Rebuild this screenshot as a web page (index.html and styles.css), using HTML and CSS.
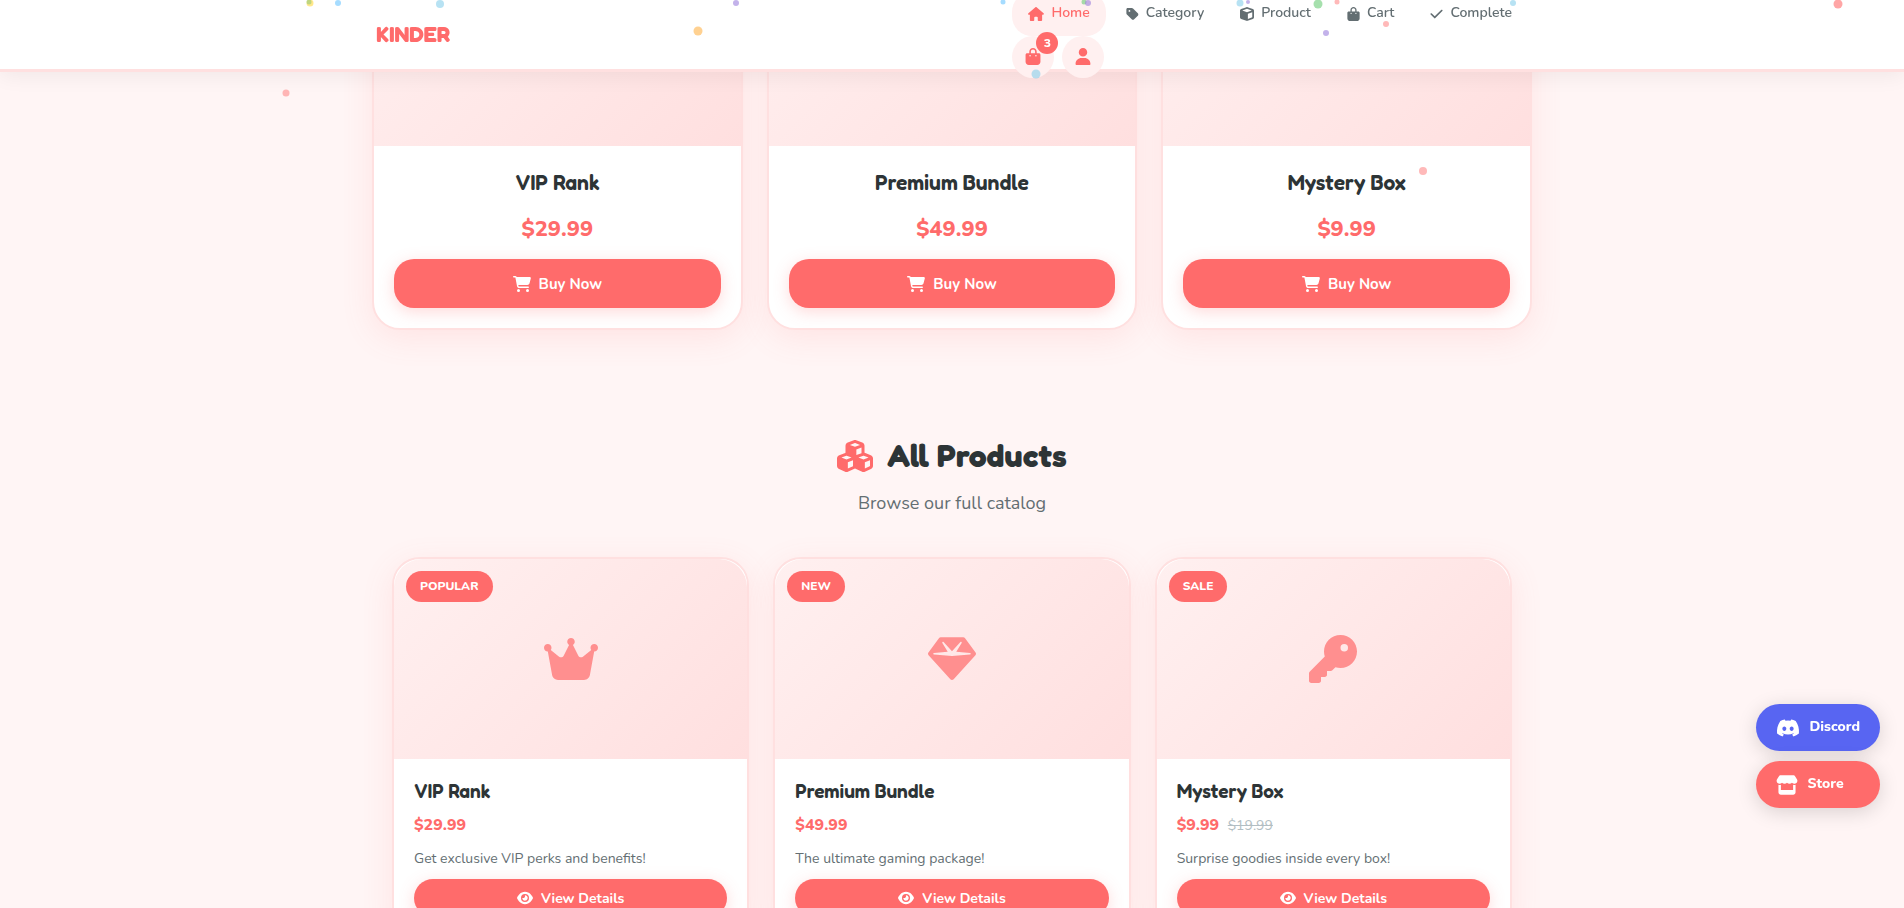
FILE: index.html
```html
<!DOCTYPE html>
<html lang="en">

<head>
  <meta charset="UTF-8">
  <meta name="viewport" content="width=device-width, initial-scale=1.0">
  <title>Kinder Store</title>
  <link rel="stylesheet" href="styles.css">
</head>

<body>
  <!-- Icon set -->
  <svg class="sprite" aria-hidden="true">
    <symbol id="i-home" viewBox="0 0 576 512"><path d="M575.8 255.5c0 18-15 32.1-32 32.1h-32l.7 160.2c0 2.7-.2 5.4-.5 8.1V472c0 22.1-17.9 40-40 40H456c-1.1 0-2.2 0-3.3-.1c-1.4 .1-2.8 .1-4.2 .1H416 392c-22.1 0-40-17.9-40-40V448 384c0-17.7-14.3-32-32-32H256c-17.7 0-32 14.3-32 32v64 24c0 22.1-17.9 40-40 40H160 128.1c-1.5 0-3-.1-4.5-.2c-1.2 .1-2.4 .2-3.6 .2H104c-22.1 0-40-17.9-40-40V360c0-.9 0-1.9 .1-2.8V287.6H32c-18 0-32-14-32-32.1c0-9 3-17 10-24L266.4 8c7-7 15-8 22-8s15 2 21 7L564.8 231.5c8 7 12 15 11 24z"/></symbol>
    <symbol id="i-tag" viewBox="0 0 448 512"><path d="M0 80V229.5c0 17 6.7 33.3 18.7 45.3l176 176c25 25 65.5 25 90.5 0L418.7 317.3c25-25 25-65.5 0-90.5l-176-176c-12-12-28.3-18.7-45.3-18.7H48C21.5 32 0 53.5 0 80zm112 32a32 32 0 1 1 0 64 32 32 0 1 1 0-64z"/></symbol>
    <symbol id="i-cube" viewBox="0 0 512 512"><path d="M234.5 5.7c13.9-5 29.1-5 43.1 0l192 68.6C495 83.4 512 107.5 512 134.6V377.4c0 27-17 51.2-42.5 60.3l-192 68.6c-13.9 5-29.1 5-43.1 0l-192-68.6C17 428.6 0 404.5 0 377.4V134.6c0-27 17-51.2 42.5-60.3l192-68.6zM256 66L82.3 128 256 190l173.7-62L256 66zm32 368.6l160-57.1v-188L288 246.6v188z"/></symbol>
    <symbol id="i-bag" viewBox="0 0 448 512"><path d="M160 112c0-35.3 28.7-64 64-64s64 28.7 64 64v48H160V112zm-48 48H48c-26.5 0-48 21.5-48 48V416c0 53 43 96 96 96H352c53 0 96-43 96-96V208c0-26.5-21.5-48-48-48H336V112C336 50.1 285.9 0 224 0S112 50.1 112 112v48zm24 48a24 24 0 1 1 0 48 24 24 0 1 1 0-48zm152 24a24 24 0 1 1 48 0 24 24 0 1 1 -48 0z"/></symbol>
    <symbol id="i-check" viewBox="0 0 448 512"><path d="M438.6 105.4c12.5 12.5 12.5 32.8 0 45.3l-256 256c-12.5 12.5-32.8 12.5-45.3 0l-128-128c-12.5-12.5-12.5-32.8 0-45.3s32.8-12.5 45.3 0L160 338.7 393.4 105.4c12.5-12.5 32.8-12.5 45.3 0z"/></symbol>
    <symbol id="i-user" viewBox="0 0 448 512"><path d="M224 256A128 128 0 1 0 224 0a128 128 0 1 0 0 256zm-45.7 48C79.8 304 0 383.8 0 482.3C0 498.7 13.3 512 29.7 512H418.3c16.4 0 29.7-13.3 29.7-29.7C448 383.8 368.2 304 269.7 304H178.3z"/></symbol>
    <symbol id="i-cart" viewBox="0 0 576 512"><path d="M0 24C0 10.7 10.7 0 24 0H69.5c22 0 41.5 12.8 50.6 32h411c26.3 0 45.5 25 38.6 50.4l-41 152.3c-8.5 31.4-37 53.3-69.5 53.3H170.7l5.4 28.5c2.2 11.3 12.1 19.5 23.6 19.5H488c13.3 0 24 10.7 24 24s-10.7 24-24 24H199.7c-34.6 0-64.3-24.6-70.7-58.5L77.4 54.5c-.7-3.8-4-6.5-7.9-6.5H24C10.7 48 0 37.3 0 24zM128 464a48 48 0 1 1 96 0 48 48 0 1 1 -96 0zm336-48a48 48 0 1 1 0 96 48 48 0 1 1 0-96z"/></symbol>
    <symbol id="i-cubes" viewBox="0 0 576 512"><path d="M290.8 48.6l78.4 29.7L288 109.5 206.8 78.3l78.4-29.7c1.8-.7 3.8-.7 5.7 0zM136 92.5V204.7c-1.3 .4-2.6 .8-3.9 1.3l-96 36.4C14.4 250.6 0 271.5 0 294.7V413.9c0 22.2 13.1 42.3 33.5 51.3l96 42.2c14.4 6.3 30.7 6.3 45.1 0L288 457.5l113.5 49.9c14.4 6.3 30.7 6.3 45.1 0l96-42.2c20.3-8.9 33.5-29.1 33.5-51.3V294.7c0-23.3-14.4-44.1-36.1-52.4l-96-36.4c-1.3-.5-2.6-.9-3.9-1.3V92.5c0-23.3-14.4-44.1-36.1-52.4l-96-36.4c-12.8-4.8-26.9-4.8-39.7 0l-96 36.4C150.4 48.4 136 69.3 136 92.5zM392 210.6l-82.4 31.2V152.6L392 121v89.6zM154.8 250.9l78.4 29.7L152 311.7 70.8 280.6l78.4-29.7c1.8-.7 3.8-.7 5.7 0zm18.8 204.4V354.8L256 323.2v95.9l-82.4 36.2zM421.2 250.9c1.8-.7 3.8-.7 5.7 0l78.4 29.7L424 311.7l-81.2-31.1 78.4-29.7zM523.2 421.2l-77.6 34.1V354.8L528 323.2v90.7c0 3.2-1.9 6-4.8 7.3z"/></symbol>
    <symbol id="i-crown" viewBox="0 0 576 512"><path d="M309 106c11.4-7 19-19.7 19-34c0-22.1-17.9-40-40-40s-40 17.9-40 40c0 14.4 7.6 27 19 34L209.7 220.6c-9.1 18.2-32.7 23.4-48.6 10.7L72 160c5-6.7 8-15 8-24c0-22.1-17.9-40-40-40S0 113.9 0 136s17.9 40 40 40c.2 0 .5 0 .7 0L86.4 427.4c5.5 30.4 32 52.6 63 52.6H426.6c30.9 0 57.4-22.1 63-52.6L535.3 176c.2 0 .5 0 .7 0c22.1 0 40-17.9 40-40s-17.9-40-40-40s-40 17.9-40 40c0 9 3 17.3 8 24l-89.1 71.3c-15.9 12.7-39.5 7.5-48.6-10.7L309 106z"/></symbol>
    <symbol id="i-gem" viewBox="0 0 512 512"><path d="M116.7 33.8c4.5-6.1 11.7-9.8 19.3-9.8H376c7.6 0 14.8 3.6 19.3 9.8l112 152c6.8 9.2 6.1 21.9-1.5 30.4l-232 256c-4.5 5-11 7.9-17.8 7.9s-13.2-2.9-17.8-7.9l-232-256c-7.7-8.5-8.3-21.2-1.5-30.4l112-152zm38.5 39.8c-3.3 2.5-4.2 7-2.1 10.5l57.4 95.6L63.3 192c-4.1 .3-7.3 3.8-7.3 8s3.2 7.6 7.3 8l192 16c.4 0 .9 0 1.3 0l192-16c4.1-.3 7.3-3.8 7.3-8s-3.2-7.6-7.3-8L301.5 179.8l57.4-95.6c2.1-3.5 1.2-8.1-2.1-10.5s-7.9-2-10.7 1L256 172.2 165.9 74.6c-2.8-3-7.4-3.4-10.7-1z"/></symbol>
    <symbol id="i-key" viewBox="0 0 512 512"><path d="M336 352c97.2 0 176-78.8 176-176S433.2 0 336 0S160 78.8 160 176c0 18.7 2.9 36.8 8.3 53.7L7 391c-4.5 4.5-7 10.6-7 17v80c0 13.3 10.7 24 24 24h80c13.3 0 24-10.7 24-24V448h40c13.3 0 24-10.7 24-24V384h40c6.4 0 12.5-2.5 17-7l33.3-33.3c16.9 5.4 35 8.3 53.7 8.3zM376 96a40 40 0 1 1 0 80 40 40 0 1 1 0-80z"/></symbol>
    <symbol id="i-eye" viewBox="0 0 576 512"><path d="M288 32c-80.8 0-145.5 36.8-192.6 80.6C48.6 156 17.3 208 2.5 243.7c-3.3 7.9-3.3 16.7 0 24.6C17.3 304 48.6 356 95.4 399.4C142.5 443.2 207.2 480 288 480s145.5-36.8 192.6-80.6c46.8-43.5 78.1-95.4 93-131.1c3.3-7.9 3.3-16.7 0-24.6c-14.9-35.7-46.2-87.7-93-131.1C433.5 68.8 368.8 32 288 32zM144 256a144 144 0 1 1 288 0 144 144 0 1 1 -288 0zm144-64c0 35.3-28.7 64-64 64c-7.1 0-13.9-1.2-20.3-3.3c-5.5-1.8-11.9 1.6-11.7 7.4c.3 6.9 1.3 13.8 3.2 20.7c13.7 51.2 66.4 81.6 117.6 67.9s81.6-66.4 67.9-117.6c-11.1-41.5-47.8-69.4-88.6-71.1c-5.8-.2-9.2 6.1-7.4 11.7c2.1 6.4 3.3 13.2 3.3 20.3z"/></symbol>
    <symbol id="i-discord" viewBox="0 0 640 512"><path d="M524.531,69.836a1.5,1.5,0,0,0-.764-.7A485.065,485.065,0,0,0,404.081,32.03a1.816,1.816,0,0,0-1.923.91,337.461,337.461,0,0,0-14.9,30.6,447.848,447.848,0,0,0-134.426,0,309.541,309.541,0,0,0-15.135-30.6,1.89,1.89,0,0,0-1.924-.91A483.689,483.689,0,0,0,116.085,69.137a1.712,1.712,0,0,0-.788.676C39.068,183.651,18.186,294.69,28.43,404.354a2.016,2.016,0,0,0,.765,1.375A487.666,487.666,0,0,0,176.02,479.918a1.9,1.9,0,0,0,2.063-.676A348.2,348.2,0,0,0,208.12,430.4a1.86,1.86,0,0,0-1.019-2.588,321.173,321.173,0,0,1-45.868-21.853,1.885,1.885,0,0,1-.185-3.126c3.082-2.309,6.166-4.711,9.109-7.137a1.819,1.819,0,0,1,1.9-.256c96.229,43.917,200.41,43.917,295.5,0a1.812,1.812,0,0,1,1.924.233c2.944,2.426,6.027,4.851,9.132,7.16a1.884,1.884,0,0,1-.162,3.126,301.407,301.407,0,0,1-45.89,21.83,1.875,1.875,0,0,0-1,2.611,391.055,391.055,0,0,0,30.014,48.815,1.864,1.864,0,0,0,2.063.7A486.048,486.048,0,0,0,610.7,405.729a1.882,1.882,0,0,0,.765-1.352C623.729,277.594,590.933,167.465,524.531,69.836ZM222.491,337.58c-28.972,0-52.844-26.587-52.844-59.239S193.056,219.1,222.491,219.1c29.665,0,53.306,26.82,52.843,59.239C275.334,310.993,251.924,337.58,222.491,337.58Zm195.38,0c-28.971,0-52.843-26.587-52.843-59.239S388.437,219.1,417.871,219.1c29.667,0,53.307,26.82,52.844,59.239C470.715,310.993,447.538,337.58,417.871,337.58Z"/></symbol>
    <symbol id="i-store" viewBox="0 0 576 512"><path d="M547.6 103.8L490.3 13.1C485.2 5 476.1 0 466.4 0H109.6C99.9 0 90.8 5 85.7 13.1L28.3 103.8c-29.6 46.8-3.4 111.9 51.9 119.4c4 .5 8.1 .8 12.1 .8c26.1 0 49.3-11.4 65.2-29c15.9 17.6 39.1 29 65.2 29c26.1 0 49.3-11.4 65.2-29c15.9 17.6 39.1 29 65.2 29c26.2 0 49.3-11.4 65.2-29c16 17.6 39.1 29 65.2 29c4.1 0 8.1-.3 12.1-.8c55.5-7.4 81.8-72.5 52.1-119.4zM499.7 254.9l-.1 0c-5.3 .7-10.7 1.1-16.2 1.1c-12.4 0-24.3-1.9-35.4-5.3V384H128V250.6c-11.2 3.5-23.2 5.4-35.6 5.4c-5.5 0-11-.4-16.3-1.1l-.1 0c-4.1-.6-8.1-1.3-12-2.3V384v64c0 35.3 28.7 64 64 64H448c35.3 0 64-28.7 64-64V384 252.6c-4 1-8 1.8-12.3 2.3z"/></symbol>
  </svg>

  <!-- Header -->
  <header class="header">
    <div class="header-inner">
      <a class="logo" href="#">KINDER</a>
      <nav class="nav">
        <div class="nav-links">
          <a class="nav-link active" href="#"><svg class="icon"><use href="#i-home"/></svg>Home</a>
          <a class="nav-link" href="#"><svg class="icon narrow"><use href="#i-tag"/></svg>Category</a>
          <a class="nav-link" href="#"><svg class="icon square"><use href="#i-cube"/></svg>Product</a>
          <a class="nav-link" href="#"><svg class="icon narrow"><use href="#i-bag"/></svg>Cart</a>
          <a class="nav-link" href="#"><svg class="icon narrow"><use href="#i-check"/></svg>Complete</a>
        </div>
        <div class="nav-actions">
          <button class="icon-btn" aria-label="Cart"><svg class="icon"><use href="#i-bag"/></svg><span class="count">3</span></button>
          <button class="icon-btn" aria-label="Account"><svg class="icon"><use href="#i-user"/></svg></button>
        </div>
      </nav>
    </div>
  </header>

  <main>
    <!-- Featured -->
    <section class="featured">
      <article class="card">
        <div class="card-image"></div>
        <div class="card-body">
          <h3 class="card-title">VIP Rank</h3>
          <div class="card-price">$29.99</div>
          <button class="btn"><svg class="icon"><use href="#i-cart"/></svg>Buy Now</button>
        </div>
      </article>
      <article class="card">
        <div class="card-image"></div>
        <div class="card-body">
          <h3 class="card-title">Premium Bundle</h3>
          <div class="card-price">$49.99</div>
          <button class="btn"><svg class="icon"><use href="#i-cart"/></svg>Buy Now</button>
        </div>
      </article>
      <article class="card">
        <div class="card-image"></div>
        <div class="card-body">
          <h3 class="card-title">Mystery Box</h3>
          <div class="card-price">$9.99</div>
          <button class="btn"><svg class="icon"><use href="#i-cart"/></svg>Buy Now</button>
        </div>
      </article>
    </section>

    <!-- All products -->
    <section class="products">
      <h2 class="section-title"><svg class="icon"><use href="#i-cubes"/></svg>All Products</h2>
      <p class="section-subtitle">Browse our full catalog</p>

      <div class="product-grid">
        <article class="card product">
          <div class="card-image">
            <span class="badge">POPULAR</span>
            <svg class="icon wide"><use href="#i-crown"/></svg>
          </div>
          <div class="card-body">
            <h3 class="card-title">VIP Rank</h3>
            <div class="card-price">$29.99</div>
            <p class="card-text">Get exclusive VIP perks and benefits!</p>
            <button class="btn"><svg class="icon"><use href="#i-eye"/></svg>View Details</button>
          </div>
        </article>
        <article class="card product">
          <div class="card-image">
            <span class="badge">NEW</span>
            <svg class="icon"><use href="#i-gem"/></svg>
          </div>
          <div class="card-body">
            <h3 class="card-title">Premium Bundle</h3>
            <div class="card-price">$49.99</div>
            <p class="card-text">The ultimate gaming package!</p>
            <button class="btn"><svg class="icon"><use href="#i-eye"/></svg>View Details</button>
          </div>
        </article>
        <article class="card product">
          <div class="card-image">
            <span class="badge">SALE</span>
            <svg class="icon"><use href="#i-key"/></svg>
          </div>
          <div class="card-body">
            <h3 class="card-title">Mystery Box</h3>
            <div class="card-price">$9.99 <del>$19.99</del></div>
            <p class="card-text">Surprise goodies inside every box!</p>
            <button class="btn"><svg class="icon"><use href="#i-eye"/></svg>View Details</button>
          </div>
        </article>
      </div>
    </section>
  </main>

  <!-- Floating links -->
  <div class="floating">
    <a class="float-btn discord" href="#"><svg class="icon"><use href="#i-discord"/></svg>Discord</a>
    <a class="float-btn" href="#"><svg class="icon"><use href="#i-store"/></svg>Store</a>
  </div>

  <div class="confetti" id="confetti"></div>

  <script>
    // x, y, size, color
    const dots = [
      [310, 3, 7, '#ffd93d'], [309, 2, 5, '#95c878'], [338, 3, 6, '#6bc5ff'],
      [440, 4, 8, '#87ceeb'], [736, 3, 6, '#9b7fdc'], [698, 31, 9, '#ffb347'],
      [286, 93, 7, '#ff8a8a'], [1423, 171, 8, '#ff8a8a'], [1838, 4, 9, '#ff6b6b'],
      [1003, 2, 5, '#6bc5ff'], [1084, 2, 5, '#6bcb77'], [1088, 3, 6, '#9b7fdc'],
      [1240, 3, 7, '#87ceeb'], [1248, 2, 4, '#9b7fdc'], [1318, 4, 9, '#6bcb77'],
      [1337, 2, 5, '#ff8a8a'], [1386, 24, 6, '#ff8a8a'], [1326, 33, 6, '#9b7fdc'],
      [1513, 3, 6, '#87ceeb'], [1036, 74, 9, '#87ceeb']
    ];
    const confetti = document.getElementById('confetti');

    dots.forEach(([x, y, size, color]) => {
      const dot = document.createElement('span');
      dot.className = 'dot';
      dot.style.left = x + 'px';
      dot.style.top = y + 'px';
      dot.style.width = size + 'px';
      dot.style.height = size + 'px';
      dot.style.background = color;
      confetti.appendChild(dot);
    });
  </script>
</body>

</html>
```
FILE: styles.css
```css
:root {
  --primary: #ff6b6b;
  --soft: #fff0f0;
  --line: #ffe0e0;
  --dark: #2d3436;
  --gray: #636e72;
  --display: "Fredoka One", Fredoka, "Baloo 2", Lato, sans-serif;
}

* {
  margin: 0;
  padding: 0;
  box-sizing: border-box;
}

body {
  font-family: Nunito, "Open Sans", sans-serif;
  background: #fff5f5;
  color: var(--dark);
  line-height: 1.6;
  overflow-x: hidden;
}

a {
  text-decoration: none;
}

button {
  border: none;
  font-family: inherit;
  cursor: pointer;
}

.sprite {
  display: none;
}

.icon {
  width: 18px;
  height: 16px;
  fill: currentColor;
  flex-shrink: 0;
}

/* Header */
.header {
  position: fixed;
  top: 0;
  left: 0;
  right: 0;
  z-index: 10;
  height: 72px;
  background: white;
  border-bottom: 3px solid var(--line);
  box-shadow: 0 4px 20px rgba(0, 0, 0, 0.06);
}

.header-inner {
  display: flex;
  align-items: center;
  justify-content: space-between;
  height: 100%;
  max-width: 1200px;
  margin: 0 auto;
  padding: 0 24px;
}

.logo {
  font-family: var(--display);
  font-size: 22px;
  font-weight: 700;
  color: var(--primary);
}

.nav-links {
  display: flex;
  gap: 4px;
}

.nav-link {
  display: flex;
  align-items: center;
  gap: 7px;
  height: 44px;
  padding: 0 16px;
  border-radius: 20px;
  font-size: 14px;
  font-weight: 600;
  color: var(--gray);
}

.nav-link .icon {
  width: 16px;
  height: 14px;
}

.nav-link .square {
  width: 14px;
}

.nav-link .narrow {
  width: 13px;
}

.nav-link.active {
  background: var(--soft);
  color: var(--primary);
}

.nav-actions {
  display: flex;
  gap: 8px;
}

.icon-btn {
  position: relative;
  display: flex;
  align-items: center;
  justify-content: center;
  width: 42px;
  height: 42px;
  border-radius: 50%;
  background: var(--soft);
  color: var(--primary);
}

.icon-btn .icon {
  width: 16px;
  height: 17px;
}

.count {
  position: absolute;
  top: -4px;
  right: -4px;
  width: 22px;
  height: 22px;
  border-radius: 50%;
  background: var(--primary);
  color: white;
  font-size: 12px;
  font-weight: 800;
  line-height: 22px;
}

/* Cards */
.featured,
.product-grid {
  display: grid;
  grid-template-columns: repeat(3, 1fr);
  gap: 24px;
}

/* the first row starts tucked under the fixed header */
.featured {
  max-width: 1200px;
  margin: -56px auto 0;
  padding: 0 20px;
}

.card {
  background: white;
  border: 2px solid var(--line);
  border-radius: 28px;
  overflow: hidden;
  box-shadow: 0 8px 32px rgba(255, 107, 107, 0.12);
}

.card-image {
  position: relative;
  display: flex;
  align-items: center;
  justify-content: center;
  height: 200px;
  border-radius: 28px 28px 0 0;
  background: linear-gradient(135deg, var(--soft), #ffdfdf);
  color: #ff8f8f;
}

.card-image .icon {
  width: 48px;
  height: 48px;
}

.card-image .wide {
  width: 54px;
}

.card-body {
  display: flex;
  flex-direction: column;
  padding: 20px;
  text-align: center;
}

.card-title {
  font-family: var(--display);
  font-size: 21px;
  font-weight: 600;
  line-height: 34px;
  margin-bottom: 10px;
}

.card-price {
  font-size: 22px;
  font-weight: 800;
  line-height: 38px;
  color: var(--primary);
  margin-bottom: 11px;
}

.btn {
  display: flex;
  align-items: center;
  justify-content: center;
  gap: 8px;
  height: 49px;
  border-radius: 20px;
  background: var(--primary);
  color: white;
  font-size: 15px;
  font-weight: 700;
  box-shadow: 0 4px 16px rgba(255, 107, 107, 0.25);
}

/* All products */
.products {
  max-width: 1160px;
  margin: 0 auto;
  padding: 100px 20px 60px;
}

.section-title {
  display: flex;
  align-items: center;
  justify-content: center;
  gap: 14px;
  font-family: var(--display);
  font-size: 32px;
  font-weight: 700;
  line-height: 52px;
}

.section-title .icon {
  width: 36px;
  height: 32px;
  color: var(--primary);
}

.section-subtitle {
  font-size: 18px;
  line-height: 28px;
  text-align: center;
  color: var(--gray);
  margin: 7px 0 40px;
}

.product .card-body {
  text-align: left;
}

.product .card-title {
  font-size: 19px;
  line-height: 24px;
  margin-bottom: 8px;
}

.product .card-price {
  font-size: 16px;
  line-height: 28px;
  margin-bottom: 8px;
}

.card-price del {
  font-size: 14px;
  font-weight: 400;
  line-height: 1;
  color: #b2bec3;
  margin-left: 4px;
}

.card-text {
  font-size: 14px;
  line-height: 24px;
  color: var(--gray);
  margin-bottom: 8px;
}

.product .btn {
  height: 38px;
  font-size: 14px;
}

.product .btn .icon {
  width: 16px;
}

.badge {
  position: absolute;
  top: 12px;
  left: 12px;
  padding: 0 14px;
  border-radius: 16px;
  background: var(--primary);
  color: white;
  font-size: 12px;
  font-weight: 800;
  line-height: 31px;
}

/* Floating links */
.floating {
  position: fixed;
  right: 24px;
  bottom: 100px;
  z-index: 9;
  display: flex;
  flex-direction: column;
  gap: 10px;
}

.float-btn {
  display: flex;
  align-items: center;
  gap: 10px;
  height: 47px;
  padding: 0 20px;
  border-radius: 24px;
  background: var(--primary);
  color: white;
  font-size: 14px;
  font-weight: 800;
  box-shadow: 0 4px 20px rgba(0, 0, 0, 0.15);
}

.float-btn .icon {
  width: 22px;
  height: 20px;
}

.float-btn.discord {
  background: #5865f2;
}

.float-btn.discord .icon {
  width: 24px;
}

/* Confetti */
.confetti {
  position: fixed;
  inset: 0;
  z-index: 20;
  overflow: hidden;
  pointer-events: none;
}

.dot {
  position: absolute;
  border-radius: 50%;
  opacity: 0.6;
  transform: translate(-50%, -50%);
}
```
